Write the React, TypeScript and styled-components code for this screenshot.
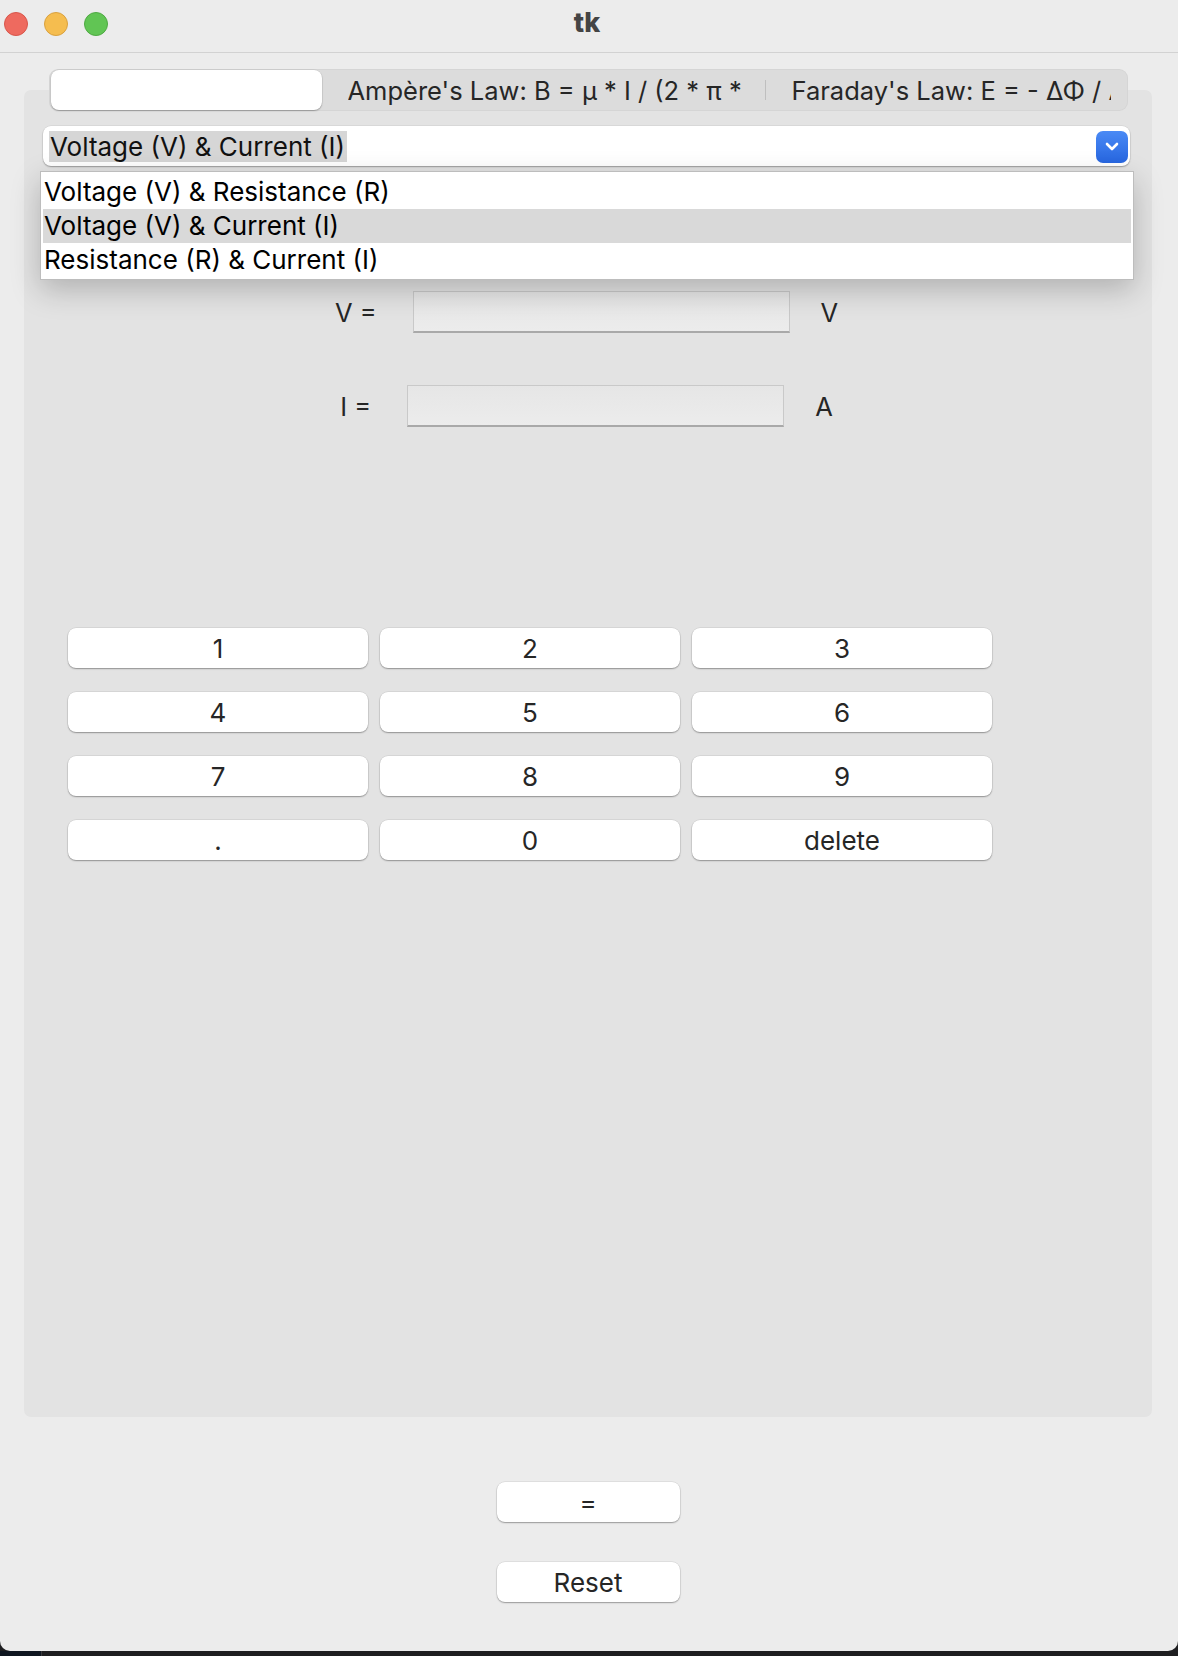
import React from 'react';
import styled, { createGlobalStyle } from 'styled-components';

const GlobalStyle = createGlobalStyle`
  html, body {
    margin: 0;
    padding: 0;
    background: #1e1e20;
  }
  body {
    font-family: Inter, "Noto Sans", sans-serif;
  }
  * {
    box-sizing: border-box;
  }
`;

const Window = styled.div`
  width: 1178px;
  height: 1651px;
  background: #ececec;
  display: flex;
  flex-direction: column;
  border-radius: 0 0 10px 10px;
  overflow: hidden;
`;

const TitleBar = styled.div`
  height: 53px;
  flex-shrink: 0;
  border-bottom: 1px solid #d2d2d2;
  display: grid;
  grid-template-columns: 1fr auto 1fr;
  align-items: center;
`;

const Lights = styled.div`
  display: flex;
  gap: 16px;
  padding-left: 4px;
  margin-top: -5px;
`;

const Light = styled.span<{ fill: string; edge: string }>`
  width: 24px;
  height: 24px;
  border-radius: 50%;
  background: ${p => p.fill};
  border: 1px solid ${p => p.edge};
`;

const Title = styled.div`
  font-weight: 800;
  font-size: 27px;
  color: #444444;
  margin-top: -8px;
  margin-right: 4px;
`;

const Body = styled.div`
  padding: 16px 26px 0 24px;
  display: flex;
  flex-direction: column;
`;

const Notebook = styled.div`
  display: flex;
  flex-direction: column;
  align-items: center;
`;

const TabBar = styled.div`
  width: 1079px;
  height: 42px;
  background: #dcdcdc;
  border-radius: 9px;
  display: flex;
  align-items: center;
  padding: 0 2px;
  margin-bottom: -21px;
  position: relative;
  z-index: 1;
  box-shadow: inset 0 0 0 1px rgba(0, 0, 0, 0.03);
`;

const Tab = styled.div<{ width?: number; selected?: boolean }>`
  ${p => (p.width ? `width: ${p.width}px; flex-shrink: 0;` : 'flex: 1; min-width: 0;')}
  height: ${p => (p.selected ? '40px' : '42px')};
  display: flex;
  align-items: center;
  padding: 0 15px 0 26px;
  font-size: 25.5px;
  color: #262626;
  background: ${p => (p.selected ? '#ffffff' : 'transparent')};
  border-radius: 8px;
  box-shadow: ${p => (p.selected ? '0 1px 1.5px rgba(0,0,0,0.28), 0 0 0 0.5px rgba(0,0,0,0.08)' : 'none')};
`;

const TabLabel = styled.span`
  display: block;
  white-space: nowrap;
  overflow: hidden;
`;

const Divider = styled.span`
  width: 1px;
  height: 20px;
  background: #bfbfbf;
  flex-shrink: 0;
`;

const Panel = styled.div`
  align-self: stretch;
  height: 1327px;
  background: #e3e3e3;
  border-radius: 7px;
  padding: 36px 22px 0 19px;
  display: flex;
  flex-direction: column;
`;

const ComboWrap = styled.div`
  position: relative;
  z-index: 2;
`;

const Combo = styled.div`
  height: 40px;
  background: #ffffff;
  border-radius: 8px;
  box-shadow: 0 1px 1.5px rgba(0, 0, 0, 0.3), 0 0 0 0.5px rgba(0, 0, 0, 0.08);
  display: flex;
  align-items: center;
  justify-content: space-between;
  padding: 1px 2px 0 6px;
`;

const ComboText = styled.span`
  background: #d6d6d6;
  color: #111111;
  font-size: 26px;
  line-height: 31px;
  padding: 0 2px 0 1px;
`;

const ComboButton = styled.span`
  width: 32px;
  height: 32px;
  border-radius: 7px;
  background: linear-gradient(#4a8af5, #2766e0);
  display: flex;
  align-items: center;
  justify-content: center;
`;

const DropList = styled.div`
  position: absolute;
  top: 45px;
  left: -3px;
  width: 1094px;
  background: #ffffff;
  border: 1px solid #bdbdbd;
  padding: 3px 2px 2px;
  box-shadow: 0 10px 28px rgba(0, 0, 0, 0.22);
`;

const Option = styled.div<{ active?: boolean }>`
  height: 34px;
  line-height: 34px;
  padding-left: 1px;
  font-size: 26px;
  color: #000000;
  background: ${p => (p.active ? '#d9d9d9' : '#ffffff')};
`;

const FieldRow = styled.div<{ top: number }>`
  display: flex;
  justify-content: center;
  align-items: center;
  margin-top: ${p => p.top}px;
`;

const FieldLabel = styled.span`
  font-size: 25.5px;
  color: #262626;
  margin-right: 36px;
`;

const Entry = styled.div`
  width: 377px;
  height: 42px;
  background: linear-gradient(#e6e6e6, #ececec);
  border: 1px solid #c9c9c9;
  border-bottom: 2px solid #a9a9a9;
`;

const Unit = styled.span`
  font-size: 25.5px;
  color: #262626;
  margin-left: 31px;
`;

const Keypad = styled.div`
  display: grid;
  grid-template-columns: repeat(3, 300px);
  column-gap: 12px;
  row-gap: 24px;
  margin: 201px 0 0 25px;
`;

const KeyButton = styled.button`
  height: 40px;
  background: #ffffff;
  border: none;
  border-radius: 8px;
  box-shadow: 0 1px 1.5px rgba(0, 0, 0, 0.32), 0 0 0 0.5px rgba(0, 0, 0, 0.1);
  font-family: Inter, "Noto Sans", sans-serif;
  font-size: 26px;
  color: #262626;
  padding: 0;
`;

const Footer = styled.div`
  display: flex;
  flex-direction: column;
  align-items: center;
  gap: 40px;
  padding-top: 65px;
`;

const ActionButton = styled(KeyButton)`
  width: 183px;
`;

const Desktop = styled.div`
  height: 5px;
  display: flex;
`;

const DesktopEdge = styled.span`
  width: 42px;
  background: #0f1620;
  border-right: 1px solid #3a3a3c;
`;

const keys = ['1', '2', '3', '4', '5', '6', '7', '8', '9', '.', '0', 'delete'];
const modes = ['Voltage (V) & Resistance (R)', 'Voltage (V) & Current (I)', 'Resistance (R) & Current (I)'];

export default function App() {
  return (
    <>
      <GlobalStyle />
      <Window>
        <TitleBar>
          <Lights>
            <Light fill="#ee6a5f" edge="#d8564b" />
            <Light fill="#f5bd4f" edge="#d9a13f" />
            <Light fill="#61c554" edge="#4fa943" />
          </Lights>
          <Title>tk</Title>
          <span />
        </TitleBar>
        <Body>
          <Notebook>
            <TabBar>
              <Tab width={271} selected />
              <Tab width={443}>
                <TabLabel>Ampère's Law: B = μ * I / (2 * π *</TabLabel>
              </Tab>
              <Divider />
              <Tab>
                <TabLabel>Faraday's Law: E = - ΔΦ / Δ</TabLabel>
              </Tab>
            </TabBar>
            <Panel>
              <ComboWrap>
                <Combo>
                  <ComboText>Voltage (V) &amp; Current (I)</ComboText>
                  <ComboButton>
                    <svg width="14" height="9" viewBox="0 0 14 9">
                      <path d="M2 2 L7 7 L12 2" fill="none" stroke="#ffffff" strokeWidth="2.6" strokeLinecap="round" strokeLinejoin="round" />
                    </svg>
                  </ComboButton>
                </Combo>
                <DropList>
                  {modes.map(m => (
                    <Option key={m} active={m === 'Voltage (V) & Current (I)'}>{m}</Option>
                  ))}
                </DropList>
              </ComboWrap>
              <FieldRow top={125}>
                <FieldLabel>V =</FieldLabel>
                <Entry />
                <Unit>V</Unit>
              </FieldRow>
              <FieldRow top={52}>
                <FieldLabel>I =</FieldLabel>
                <Entry />
                <Unit>A</Unit>
              </FieldRow>
              <Keypad>
                {keys.map(k => (
                  <KeyButton key={k}>{k}</KeyButton>
                ))}
              </Keypad>
            </Panel>
          </Notebook>
          <Footer>
            <ActionButton>=</ActionButton>
            <ActionButton>Reset</ActionButton>
          </Footer>
        </Body>
      </Window>
      <Desktop>
        <DesktopEdge />
      </Desktop>
    </>
  );
}
